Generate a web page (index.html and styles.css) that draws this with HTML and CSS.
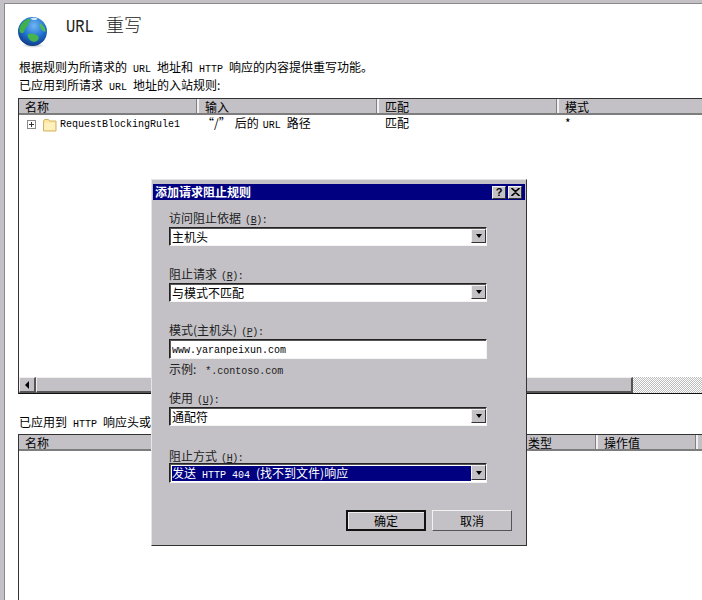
FILE: index.html
```html
<!DOCTYPE html>
<html lang="zh-CN">
<head>
<meta charset="utf-8">
<title>URL 重写</title>
<link rel="stylesheet" href="styles.css">
</head>
<body>
<div class="window">
  <main class="panel">
    <header class="page-head">
      <svg class="globe" width="32" height="32" viewBox="0 0 32 32">
        <defs>
          <radialGradient id="sea" cx="0.55" cy="0.3" r="0.75">
            <stop offset="0" stop-color="#6fb6f2"/>
            <stop offset="0.55" stop-color="#1f6fd0"/>
            <stop offset="1" stop-color="#0c3478"/>
          </radialGradient>
          <radialGradient id="shade" cx="0.5" cy="0.5" r="0.5">
            <stop offset="0" stop-color="#8a8f96" stop-opacity="0.6"/>
            <stop offset="1" stop-color="#8a8f96" stop-opacity="0"/>
          </radialGradient>
        </defs>
        <ellipse cx="15" cy="29.5" rx="12" ry="2.5" fill="url(#shade)"/>
        <g transform="translate(-1.5 0.5)">
          <circle cx="16" cy="15" r="14.5" fill="url(#sea)"/>
          <path d="M3 11 C5 6 9 3 13 2 C15 3 13 5 12 7 C11 10 9 11 8 14 C7 18 4 17 3 15 Z" fill="#3fb04a"/>
          <path d="M11 18 C14 16 19 17 22 20 C23 23 20 26 16 25 C13 24 11 21 11 18 Z" fill="#45b44c"/>
          <path d="M24 7 C26 8 29 11 29 15 C27 16 25 13 24 11 C23 9 23 8 24 7 Z" fill="#4cbb52"/>
          <path d="M14 2 C16 1 19 1 21 2 C20 4 16 4 14 2 Z" fill="#cfe8f8"/>
        </g>
      </svg>
      <h1 class="page-title"><span class="title-en">URL</span> 重写</h1>
    </header>

    <p class="intro">根据规则为所请求的<span class="en"> URL </span>地址和<span class="en"> HTTP </span>响应的内容提供重写功能。</p>
    <p class="caption">已应用到所请求<span class="en"> URL </span>地址的入站规则:</p>

    <section class="grid grid-top">
      <div class="grid-head">
        <div class="col col-180">名称</div>
        <div class="col col-180">输入</div>
        <div class="col col-180">匹配</div>
        <div class="col col-rest">模式</div>
      </div>
      <div class="grid-row">
        <div class="cell col-180 cell-name">
          <span class="expander"></span>
          <svg class="folder" width="14" height="14" viewBox="0 0 14 14">
            <path d="M0.5 3 L1.5 1.5 H5.5 L6.5 3 H13 V13 H0.5 Z" fill="#fde59a" stroke="#d2b468"/>
            <path d="M1.5 4.5 H12 V12 H1.5 Z" fill="#fff1bd"/>
          </svg>
          <span class="en">RequestBlockingRule1</span>
        </div>
        <div class="cell col-180 cell-input"><span class="quote">“/”</span>后的<span class="en url-tight"> URL </span>路径</div>
        <div class="cell col-180">匹配</div>
        <div class="cell col-rest">*</div>
      </div>
      <div class="grid-spacer"></div>
      <div class="scrollbar">
        <div class="scroll-btn"><span class="arrow-left"></span></div>
        <div class="scroll-thumb"></div>
        <div class="scroll-track"></div>
      </div>
    </section>

    <p class="caption caption-2">已应用到<span class="en"> HTTP </span>响应头或</p>

    <section class="grid grid-bottom">
      <div class="grid-head">
        <div class="col col-180">名称</div>
        <div class="col col-323"></div>
        <div class="col col-76">类型</div>
        <div class="col col-100">操作值</div>
        <div class="col col-rest"></div>
      </div>
    </section>
  </main>

  <div class="dialog">
    <div class="titlebar">
      <span class="title-text">添加请求阻止规则</span>
      <span class="cap-btn cap-help">?</span>
      <span class="cap-btn cap-close">
        <svg width="9" height="8" viewBox="0 0 9 8"><path d="M0.5 0 L4.5 3.5 L8.5 0 M0.5 8 L4.5 4.5 L8.5 8" fill="none" stroke="#000" stroke-width="1.6"/></svg>
      </span>
    </div>
    <div class="dialog-body">
      <div class="field field-1">
        <label class="label">访问阻止依据<span class="en mnemonic">(<u>B</u>):</span></label>
        <div class="combo"><span class="combo-text">主机头</span><span class="combo-btn"><span class="arrow-down"></span></span></div>
      </div>
      <div class="field field-2">
        <label class="label">阻止请求<span class="en mnemonic">(<u>R</u>):</span></label>
        <div class="combo"><span class="combo-text">与模式不匹配</span><span class="combo-btn"><span class="arrow-down"></span></span></div>
      </div>
      <div class="field field-2">
        <label class="label">模式(主机头)<span class="en mnemonic">(<u>P</u>):</span></label>
        <div class="textbox"><span class="en">www.yaranpeixun.com</span></div>
        <div class="example">示例:<span class="en example-en"> *.contoso.com</span></div>
      </div>
      <div class="field field-3">
        <label class="label">使用<span class="en mnemonic">(<u>U</u>):</span></label>
        <div class="combo"><span class="combo-text">通配符</span><span class="combo-btn"><span class="arrow-down"></span></span></div>
      </div>
      <div class="field field-4">
        <label class="label label-tight">阻止方式<span class="en mnemonic">(<u>H</u>):</span></label>
        <div class="combo combo-tall"><span class="combo-text combo-selected">发送<span class="en"> HTTP 404 </span>(找不到文件)响应</span><span class="combo-btn"><span class="arrow-down"></span></span></div>
      </div>
      <div class="actions">
        <button class="btn btn-default" type="button">确定</button>
        <button class="btn" type="button">取消</button>
      </div>
    </div>
  </div>
</div>
</body>
</html>
```
FILE: styles.css
```css
* { box-sizing: border-box; }
html, body { margin: 0; padding: 0; }
body {
  width: 702px;
  height: 600px;
  overflow: hidden;
  font-family: "Noto Sans CJK SC", "Liberation Sans", sans-serif;
  font-size: 12px;
  line-height: 14px;
  color: #000;
  background: #c3c1c6;
}
.en { font-family: "Liberation Mono", monospace; font-size: 10px; white-space: pre; }
.window { position: relative; width: 702px; height: 600px; padding: 3px 0 0 4px; }
.panel {
  height: 597px;
  background: #fff;
  border-top: 1px solid #8a8a8a;
  border-left: 1px solid #8a8a8a;
  padding: 12px 0 0 13px;
  overflow: hidden;
}
.page-head { display: flex; align-items: flex-start; height: 42px; }
.globe { display: block; flex: none; }
.page-title {
  margin: -3px 0 0 16px;
  font-size: 18px;
  line-height: 22px;
  font-weight: 300;
  white-space: pre;
  color: #222;
}
.title-en {
  display: inline-block;
  font-family: "Liberation Mono", monospace;
  font-size: 15.5px;
  font-weight: 400;
  margin-right: 8px;
  transform: translateY(-1px) scaleY(1.2);
}
.intro, .caption { margin: 0 0 0 1px; height: 16px; line-height: 16px; white-space: nowrap; }
.intro { margin-top: 1px; }
.caption { margin-top: 2px; }
.caption-2 { margin-top: 20px; }
.grid {
  display: flex;
  flex-direction: column;
  width: 684px;
  margin-top: 5px;
  border-left: 1px solid #333;
  border-top: 1px solid #333;
}
.grid-top { height: 296px; border-bottom: 1px solid #111; }
.grid-bottom { height: 170px; margin-top: 4px; }
.grid-head {
  display: flex;
  flex: none;
  height: 16px;
  background: #c3c1c6;
  border-bottom: 2px solid #7d7d7d;
}
.col {
  flex: none;
  height: 14px;
  line-height: 14px;
  padding: 1px 0 0 6px;
  border-right: 2px solid #f0f0f0;
  box-shadow: inset -1px 0 0 #808080;
}
.col-180 { width: 180px; }
.col-323 { width: 323px; }
.col-76 { width: 76px; }
.col-100 { width: 100px; }
.col-rest { flex: 1; border-right: 0; box-shadow: none; }
.grid-row { display: flex; flex: none; height: 18px; padding-top: 1px; }
.cell { flex: none; line-height: 14px; padding-left: 6px; white-space: nowrap; }
.cell.col-rest { flex: 1; }
.cell-name { display: flex; align-items: center; padding-left: 8px; }
.cell-input { padding-left: 3px; }
.quote { margin-right: 4px; }
.url-tight { margin-left: -2px; }
.expander {
  position: relative;
  display: block;
  width: 9px;
  height: 9px;
  margin-right: 7px;
  border: 1px solid #8a8a8a;
  background:
    linear-gradient(#333, #333) center / 5px 1px no-repeat,
    linear-gradient(#333, #333) center / 1px 5px no-repeat,
    #fff;
}
.folder { display: block; flex: none; margin-right: 3px; }
.grid-spacer { flex: 1; }
.scrollbar { display: flex; flex: none; height: 16px; background: #c3c1c6; }
.scroll-btn, .scroll-thumb {
  flex: none;
  border-top: 1px solid #efefef;
  border-left: 1px solid #efefef;
  border-right: 2px solid #555;
  border-bottom: 2px solid #555;
  background: #c3c1c6;
}
.scroll-btn { display: flex; align-items: center; justify-content: center; width: 17px; }
.arrow-left {
  width: 0; height: 0;
  border-top: 4px solid transparent;
  border-bottom: 4px solid transparent;
  border-right: 4px solid #000;
}
.scroll-thumb { width: 597px; }
.scroll-track {
  flex: 1;
  background: conic-gradient(#bdbdbd 25%, #fff 0 50%, #bdbdbd 0 75%, #fff 0) 0 0 / 2px 2px;
}

.dialog {
  position: absolute;
  left: 151px;
  top: 179px;
  width: 376px;
  height: 367px;
  padding: 4px 1px 0;
  background: #c3c1c6;
  border: 1px solid;
  border-color: #e6e6e6 #333 #333 #e6e6e6;
}
.titlebar {
  display: flex;
  align-items: center;
  height: 16px;
  padding: 0 3px 0 2px;
  background: #000080;
  color: #fff;
}
.title-text { flex: 1; font-weight: 700; line-height: 16px; }
.cap-btn {
  display: flex;
  align-items: center;
  justify-content: center;
  width: 14px;
  height: 13px;
  background: #c3c1c6;
  color: #000;
  font: 700 11px/12px "Liberation Sans", sans-serif;
  border: 1px solid;
  border-color: #f2f2f2 #333 #333 #f2f2f2;
}
.cap-close { margin-left: 2px; }
.dialog-body { padding: 11px 37px 0 16px; }
.label { display: block; height: 14px; line-height: 14px; margin-bottom: 2px; white-space: nowrap; color: #222; }
.mnemonic { margin-left: 4px; letter-spacing: -0.4px; }
.label-tight { margin-bottom: 0; }
.field-2 { margin-top: 21px; }
.field-3 { margin-top: 15px; }
.field-4 { margin-top: 23px; }
.combo, .textbox {
  width: 318px;
  background: #fff;
  border: 1px solid;
  border-color: #222 #f4f4f4 #f4f4f4 #222;
  box-shadow: inset 1px 1px 0 #555;
}
.combo { display: flex; height: 19px; padding: 2px 0 1px 2px; }
.combo-tall { height: 20px; }
.combo-text { flex: 1; line-height: 14px; white-space: nowrap; }
.combo-selected {
  background: #000080;
  color: #fff;
  height: 15px;
}
.combo-btn {
  flex: none;
  display: flex;
  align-items: center;
  justify-content: center;
  width: 15px;
  height: 100%;
  margin-top: -1px;
  background: #c3c1c6;
  border: 1px solid;
  border-color: #f2f2f2 #333 #333 #f2f2f2;
}
.arrow-down {
  width: 0; height: 0;
  border-left: 3.5px solid transparent;
  border-right: 3.5px solid transparent;
  border-top: 4px solid #000;
}
.textbox { height: 20px; padding: 0 2px; line-height: 16px; }
.example { margin-top: 2px; height: 15px; line-height: 15px; color: #222; }
.example-en { margin-left: 3px; }
.actions { display: flex; justify-content: flex-end; gap: 6px; margin: 27px -24px 0 0; }
.btn {
  width: 80px;
  height: 21px;
  padding: 0;
  font: inherit;
  line-height: 16px;
  color: #000;
  background: #c3c1c6;
  border: 1px solid;
  border-color: #f2f2f2 #555 #555 #f2f2f2;
}
.btn-default { border: 2px solid #111; box-shadow: inset 1px 1px 0 #eee; }
```
